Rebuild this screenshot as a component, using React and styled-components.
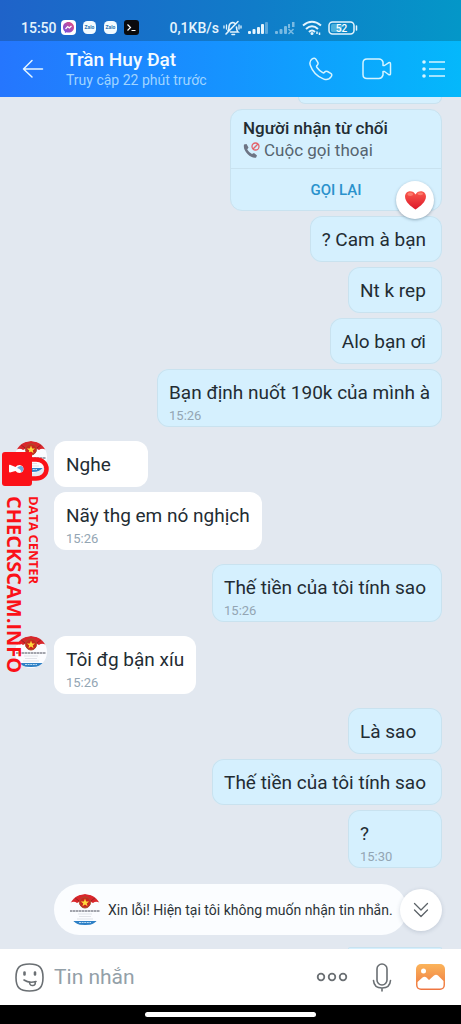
import React from 'react';
import styled, { createGlobalStyle, css } from 'styled-components';

const GlobalStyle = createGlobalStyle`
  * {
    box-sizing: border-box;
  }

  body {
    margin: 0;
    font-family: Roboto, "Noto Sans", sans-serif;
    background-color: #e2e8f0;
  }

  button {
    display: flex;
    align-items: center;
    justify-content: center;
    padding: 0;
    border: none;
    background: none;
    font-family: inherit;
  }

  svg {
    display: block;
    flex-shrink: 0;
  }
`;

const Page = styled.div`
  display: flex;
  flex-direction: column;
  min-height: 100vh;
`;

const StatusBar = styled.div`
  display: flex;
  align-items: center;
  height: 41px;
  padding: 14px 20px 0 21px;
  background: linear-gradient(90deg, #1f63c9, #107cc9 55%, #0497c8);
  color: #e4f4fd;
  font-size: 14px;
  font-weight: 500;
  line-height: 18px;
`;

const AppBadges = styled.div`
  display: flex;
  align-items: center;
  gap: 6px;
  margin-left: 4px;
`;

const Signals = styled.div`
  display: flex;
  align-items: center;
  gap: 6px;
  margin-left: 4px;
`;

const Speed = styled.span`
  margin-left: 31px;
`;

const Header = styled.header`
  display: flex;
  align-items: center;
  height: 56px;
  padding: 0 15px 0 22px;
  background: linear-gradient(90deg, #2576fe, #1594ff 50%, #04b8fb);
`;

const Contact = styled.div`
  flex: 1;
  margin-left: 22px;
`;

const ContactName = styled.h1`
  margin: 0;
  color: #f4fbff;
  font-size: 19px;
  font-weight: 500;
  line-height: 22px;
`;

const LastSeen = styled.p`
  margin: 0;
  color: #a0d4ff;
  font-size: 14px;
  line-height: 18px;
`;

const HeaderActions = styled.div`
  display: flex;
  align-items: center;
  gap: 28px;
`;

const Chat = styled.main`
  position: relative;
  display: flex;
  flex: 1;
  flex-direction: column;
  gap: 14px;
  overflow: hidden;
  padding: 0 19px 0 15px;
  background-color: #e2e8f0;
`;

const Group = styled.section`
  display: flex;
  flex-direction: column;
  align-items: ${({ mine }) => (mine ? 'flex-end' : 'flex-start')};
  gap: 5px;
`;

const Incoming = styled.div`
  display: flex;
  align-items: flex-start;
  gap: 7px;
`;

const ownSkin = css`
  border: 1px solid #c9e2ef;
  background-color: #d5f0fe;
`;

const Bubble = styled.div`
  min-width: 94px;
  padding: ${({ mine, tight }) => (mine && !tight ? '13px 16px 11px 12px' : '13px 12px 11px')};
  padding-bottom: ${({ timed }) => (timed ? '4px' : '11px')};
  border-radius: 12px;
  background-color: ${({ mine }) => (mine ? '#d5f0fe' : '#fff')};
  box-shadow: ${({ mine }) => (mine ? 'inset 0 0 0 1px #c9e2ef' : 'none')};
  color: #232c33;
  font-size: 19px;
  line-height: 22px;
`;

const Time = styled.time`
  display: block;
  margin-top: 5px;
  color: #93a5b3;
  font-size: 13px;
  line-height: 14px;
`;

const EarlierBubble = styled.div`
  ${ownSkin}
  width: 144px;
  height: 7px;
  border-top: none;
  border-radius: 0 0 12px 12px;
`;

const LaterBubble = styled.div`
  ${ownSkin}
  align-self: flex-end;
  width: 94px;
  height: 2px;
  border-bottom: none;
  border-radius: 12px 12px 0 0;
  margin-top: -2px;
`;

const CallCard = styled.article`
  ${ownSkin}
  position: relative;
  width: 212px;
  border-radius: 12px;
`;

const CallInfo = styled.div`
  padding: 7px 12px 7px;
  border-bottom: 1px solid #c9e2ef;
`;

const CallTitle = styled.h2`
  margin: 0;
  color: #232c33;
  font-size: 17px;
  font-weight: 500;
  line-height: 22px;
`;

const CallType = styled.p`
  display: flex;
  align-items: center;
  gap: 4px;
  margin: 0;
  color: #56646f;
  font-size: 17px;
  line-height: 22px;
`;

const CallBack = styled.button`
  width: 100%;
  height: 41px;
  color: #2a92cc;
  font-size: 15px;
  font-weight: 500;
`;

const Reaction = styled.button`
  position: absolute;
  right: 7px;
  bottom: -9px;
  width: 38px;
  height: 38px;
  border-radius: 50%;
  background-color: #fff;
  box-shadow: 0 1px 3px rgba(40, 70, 90, 0.4);
`;

const NoticeRow = styled.div`
  display: flex;
  align-items: center;
  margin-top: 2px;
  padding-left: 39px;
`;

const Notice = styled.div`
  display: flex;
  flex: 1;
  align-items: center;
  gap: 7px;
  height: 51px;
  padding-left: 15px;
  margin-right: -7px;
  border-radius: 26px;
  background-color: #fbfdff;
  color: #2c3338;
  font-size: 14px;
  white-space: nowrap;
`;

const ScrollDown = styled.button`
  width: 42px;
  height: 42px;
  border-radius: 50%;
  background-color: #fff;
  box-shadow: 0 1px 4px rgba(60, 80, 110, 0.2);
`;

const Watermark = styled.aside`
  position: absolute;
  top: 354px;
  left: 2px;
  color: #fb1118;
  font-family: "Open Sans", sans-serif;
  font-weight: 700;
`;

const WatermarkText = styled.div`
  display: flex;
  flex-direction: row-reverse;
  justify-content: flex-end;
  margin-top: 10px;
`;

const SiteName = styled.span`
  writing-mode: vertical-rl;
  font-size: 20px;
  line-height: 24px;
`;

const SiteTag = styled.span`
  writing-mode: vertical-rl;
  font-size: 13px;
  line-height: 16px;
`;

const Composer = styled.form`
  display: flex;
  align-items: center;
  height: 56px;
  padding: 0 15px;
  background-color: #fff;
`;

const MessageInput = styled.input`
  flex: 1;
  min-width: 0;
  margin-left: 10px;
  padding: 0;
  border: none;
  outline: none;
  font-family: inherit;
  font-size: 21px;

  &::placeholder {
    color: #93a0a8;
    opacity: 1;
  }
`;

const ComposerActions = styled.div`
  display: flex;
  align-items: center;
  gap: 24px;
`;

const NavBar = styled.footer`
  display: flex;
  justify-content: center;
  height: 19px;
  padding-top: 7px;
  background-color: #000;
`;

const NavHandle = styled.div`
  width: 37%;
  height: 5px;
  border-radius: 3px;
  background-color: #fff;
`;

const Avatar = () => (
  <svg width="32" height="32" viewBox="0 0 32 32">
    <defs>
      <clipPath id="round">
        <circle cx="16" cy="16" r="16" />
      </clipPath>
    </defs>
    <g clipPath="url(#round)">
      <rect y="8" width="32" height="24" fill="#fbfcff" />
      <path d="M1 9Q4 1 11 1L16 0L21 1Q28 1 31 9Q27 6.500 24 9L20 7H12L8 9Q5 6.500 1 9Z" fill="#d9262b" />
      <path d="M5 3L10 7M27 3L22 7" stroke="#9d1e25" strokeWidth="1" />
      <circle cx="16" cy="8.500" r="5.500" fill="#c9281f" stroke="#a8502d" strokeWidth="1" />
      <path d="M16 4.500l1.100 2.900 3 .1-2.400 1.900.9 2.900-2.600-1.700-2.600 1.700.9-2.900-2.400-1.900 3-.1z" fill="#ffd83b" />
      <path d="M1 17H31" stroke="#4a4c5a" strokeWidth="1" strokeDasharray="2.500 .5" />
      <path d="M9 20H23M10 22.500H22M8 25H24" stroke="#d5d9e0" strokeWidth=".7" />
      <path d="M2 27H30L26 30Q16 32 6 30Z" fill="#2e80c6" />
      <path d="M10 28.500H22" stroke="#b9daf2" strokeWidth="1" strokeDasharray="2 .6" />
    </g>
  </svg>
);

const ZaloBadge = () => (
  <svg width="15" height="15" viewBox="0 0 15 15">
    <rect x="1" y="1" width="13" height="13" rx="4.500" fill="#f3fbff" />
    <text x="7.500" y="9" textAnchor="middle" fontSize="5" fontWeight="700" fill="#2f76b5">Zalo</text>
  </svg>
);

const StatusIcons = () => (
  <Signals>
    <svg width="19" height="18" viewBox="0 0 19 18" fill="none" stroke="#e4f4fd" strokeWidth="1.600" strokeLinecap="round">
      <path d="M5 11.500Q6 10.500 6 7.500Q6.500 4 9.500 3.500Q11 3.500 12 4.500M13.500 8Q13.500 11.500 15 13H7.500M9 15.500H11.500M3 15L15 2.500" />
      <path d="M3.500 6V10M1 7V9M16 6V10M18 7V9" strokeWidth="1.300" />
    </svg>
    <svg width="21" height="14" viewBox="0 0 21 14" fill="#e4f4fd">
      <rect x="0" y="10" width="3" height="3" rx="1" />
      <rect x="4.500" y="8" width="3" height="5" rx="1" />
      <rect x="9" y="6" width="3" height="7" rx="1" />
      <rect x="13" y="3" width="3" height="10" rx="1" />
      <rect x="17" y="1" width="3" height="12" rx="1" opacity=".35" />
    </svg>
    <svg width="21" height="14" viewBox="0 0 21 14" fill="#e4f4fd" opacity=".5">
      <rect x="0" y="10" width="3" height="3" rx="1" />
      <rect x="4.500" y="8" width="3" height="5" rx="1" />
      <rect x="9" y="5" width="3" height="8" rx="1" />
      <rect x="13" y="3" width="2" height="4" />
      <rect x="17" y="1" width="2.500" height="5" />
      <path d="M13.500 8L18.500 13M18.500 8L13.500 13" stroke="#e4f4fd" strokeWidth="1.500" />
    </svg>
    <svg width="20" height="16" viewBox="0 0 20 16" fill="none" stroke="#e4f4fd" strokeWidth="2">
      <path d="M1 5.500Q10-2 19 5.500M4 9Q10 3.500 16 9M7 12Q10 9 13 12" />
      <circle cx="10" cy="13.500" r="1.500" fill="#e4f4fd" stroke="none" />
      <path d="M15 11.500V14M17.500 12.500V15" strokeWidth="1.500" />
    </svg>
    <svg width="30" height="14" viewBox="0 0 30 14">
      <rect x="1" y="1" width="25" height="12" rx="3.500" fill="none" stroke="#e4f4fd" strokeWidth="1.500" />
      <rect x="3" y="3" width="11" height="8" rx="1.500" fill="#4db1dc" />
      <path d="M28.500 5V9" stroke="#e4f4fd" strokeWidth="1.500" strokeLinecap="round" />
      <text x="13.500" y="10.500" textAnchor="middle" fontSize="10" fontWeight="500" fill="#fff">52</text>
    </svg>
  </Signals>
);

const Message = ({ mine, tight, time, children }) => (
  <Bubble mine={mine} tight={tight} timed={Boolean(time)}>
    {children}
    {time && <Time>{time}</Time>}
  </Bubble>
);

const App = () => {
  return (
    <Page>
      <GlobalStyle />
      <StatusBar>
        <span>15:50</span>
        <AppBadges>
          <svg width="15" height="15" viewBox="0 0 15 15">
            <defs>
              <linearGradient id="messenger" x1="0" y1="1" x2="1" y2="0">
                <stop offset="0" stopColor="#6450e8" />
                <stop offset="1" stopColor="#ef4b7c" />
              </linearGradient>
            </defs>
            <rect width="15" height="15" rx="4" fill="#fff" />
            <path d="M7.500 2C4.200 2 2 4.400 2 7.400c0 1.700.7 3 1.900 4V13l1.700-.8c.6.200 1.200.3 1.900.3 3.300 0 5.500-2.300 5.500-5.100S10.800 2 7.500 2z" fill="url(#messenger)" />
            <path d="M4.500 9L6.700 6.500L8.300 8L10.500 6" fill="none" stroke="#fff" strokeWidth="1.200" />
          </svg>
          <ZaloBadge />
          <ZaloBadge />
          <svg width="15" height="15" viewBox="0 0 15 15">
            <rect width="15" height="15" rx="3" fill="#0a0a0c" />
            <path d="M3.500 4.500L6.500 7.500L3.500 10.500M7.500 10.500H11.500" fill="none" stroke="#fff" strokeWidth="1.200" />
          </svg>
        </AppBadges>
        <Speed>0,1KB/s</Speed>
        <StatusIcons />
      </StatusBar>

      <Header>
        <button type="button" aria-label="Quay lại">
          <svg width="22" height="20" viewBox="0 0 22 20" fill="none" stroke="#e6f6ff" strokeWidth="1.500" strokeLinecap="round" strokeLinejoin="round">
            <path d="M20.500 10H1.500M10 1.500L1.500 10L10 18" />
          </svg>
        </button>
        <Contact>
          <ContactName>Trần Huy Đạt</ContactName>
          <LastSeen>Truy cập 22 phút trước</LastSeen>
        </Contact>
        <HeaderActions>
          <button type="button" aria-label="Gọi thoại">
            <svg width="26" height="24" viewBox="0 0 26 24" fill="none" stroke="#d5f4ff" strokeWidth="1.500" strokeLinejoin="round">
              <path d="M4.200 1.900C5.700.8 7.200 1 8 2.300L9.800 5.400C10.500 6.800 10 7.700 8.900 8.600C8.300 9.200 8.500 9.800 9 10.500C10.600 12.700 12.500 14.500 14.700 15.700C15.500 16.100 16 15.900 16.500 15.200C17.300 14.100 18.300 13.900 19.500 14.500L22.700 16.300C24 17 24.100 18.300 23.200 19.600C21.500 22.100 18.800 23.200 15.800 22.100C9.500 19.700 4.300 14.100 2.300 8.200C1.400 5.500 2.200 3.300 4.200 1.900Z" />
            </svg>
          </button>
          <button type="button" aria-label="Gọi video">
            <svg width="30" height="22" viewBox="0 0 30 22" fill="none" stroke="#d5f4ff" strokeWidth="1.500" strokeLinejoin="round">
              <path d="M5 1H17Q20 1 21 4V7.500H22.500L26.500 4.800Q28.500 4 28.500 6V15.500Q28.500 17.500 26.500 16.500L22.500 13.500H21V17Q20 20.500 17 20.500H5Q1 20.500 1 16.500V5Q1 1 5 1Z" />
            </svg>
          </button>
          <button type="button" aria-label="Tùy chọn">
            <svg width="26" height="20" viewBox="0 0 26 20" stroke="#d5f4ff" strokeWidth="1.500" fill="#d5f4ff">
              <path d="M9 3H25M9 10H25M9 17H25" />
              <g stroke="none">
                <circle cx="4" cy="3" r="1.800" />
                <circle cx="4" cy="10" r="1.800" />
                <circle cx="4" cy="17" r="1.800" />
              </g>
            </svg>
          </button>
        </HeaderActions>
      </Header>

      <Chat>
        <Group mine>
          <EarlierBubble />
          <CallCard>
            <CallInfo>
              <CallTitle>Người nhận từ chối</CallTitle>
              <CallType>
                <svg width="17" height="17" viewBox="0 0 17 17">
                  <path d="M1 2.500L3.500 2L5.500 5.500L4.200 7.500Q6 10.500 9 12L11 11L14 13.500L13 15.700Q9 16.500 4.500 12Q0 7 1 2.500Z" fill="#6d7484" />
                  <circle cx="12.500" cy="4.500" r="3.500" fill="none" stroke="#e4626a" strokeWidth="1.300" />
                  <path d="M10 7L15 2" stroke="#e4626a" strokeWidth="1.300" />
                </svg>
                Cuộc gọi thoại
              </CallType>
            </CallInfo>
            <CallBack type="button">GỌI LẠI</CallBack>
            <Reaction type="button" aria-label="Thả tim">
              <svg width="23" height="20" viewBox="0 0 24 21">
                <defs>
                  <linearGradient id="heart" x1="0" y1="0" x2="0" y2="1">
                    <stop offset="0" stopColor="#fb5a4e" />
                    <stop offset="1" stopColor="#dc1728" />
                  </linearGradient>
                </defs>
                <path d="M12 20.500C7 17 1 12.500 1 6.800C1 3.500 3.300 1.200 6.300 1.200C8.900 1.200 11 2.500 12 4.600C13 2.500 15.100 1.200 17.700 1.200C20.700 1.200 23 3.500 23 6.800C23 12.500 17 17 12 20.500Z" fill="url(#heart)" />
                <ellipse cx="6.500" cy="4.500" rx="3" ry="1.800" fill="#ff9a85" opacity=".6" />
                <ellipse cx="17" cy="4" rx="3" ry="1.500" fill="#ff9a85" opacity=".6" />
              </svg>
            </Reaction>
          </CallCard>
          <Message mine>? Cam à bạn</Message>
          <Message mine>Nt k rep</Message>
          <Message mine>Alo bạn ơi</Message>
          <Message mine tight time="15:26">Bạn định nuốt 190k của mình à</Message>
        </Group>

        <Incoming>
          <Avatar />
          <Group>
            <Message>Nghe</Message>
            <Message time="15:26">Nãy thg em nó nghịch</Message>
          </Group>
        </Incoming>

        <Group mine>
          <Message mine time="15:26">Thế tiền của tôi tính sao</Message>
        </Group>

        <Incoming>
          <Avatar />
          <Message time="15:26">Tôi đg bận xíu</Message>
        </Incoming>

        <Group mine>
          <Message mine>Là sao</Message>
          <Message mine>Thế tiền của tôi tính sao</Message>
          <Message mine time="15:30">?</Message>
        </Group>

        <NoticeRow>
          <Notice>
            <Avatar />
            Xin lỗi! Hiện tại tôi không muốn nhận tin nhắn.
          </Notice>
          <ScrollDown type="button" aria-label="Xuống cuối">
            <svg width="16" height="16" viewBox="0 0 16 16" fill="none" stroke="#5d6368" strokeWidth="1.300" strokeLinecap="round" strokeLinejoin="round">
              <path d="M1.500 1.500L8 8L14.500 1.500M1.500 8L8 14.500L14.500 8" />
            </svg>
          </ScrollDown>
        </NoticeRow>
        <LaterBubble />

        <Watermark>
          <svg width="47" height="35" viewBox="0 0 47 35">
            <path d="M29 8.500H34C40 8.500 44.500 12.500 44.500 18S40 27.500 34 27.500H29" fill="none" stroke="#fb1118" strokeWidth="4.500" />
            <rect y="1" width="30" height="34" rx="3" fill="#fb1118" />
            <path d="M7 14.500Q7 13.500 8 13.800L13.500 16Q15 14 17.500 14Q21.500 14.500 21.500 18Q21.500 21.500 17.500 22Q15 22 13.500 20L8 21.500Q7 21.500 7 20.500Z" fill="#fff" />
            <path d="M15 17Q17 14.500 19.500 15Q21.500 16 21.500 18Q21 20.500 19 21.500Q20 18.500 15 17Z" fill="#6fabdc" />
          </svg>
          <WatermarkText>
            <SiteTag>DATA CENTER</SiteTag>
            <SiteName>CHECKSCAM.INFO</SiteName>
          </WatermarkText>
        </Watermark>
      </Chat>

      <Composer>
        <button type="button" aria-label="Nhãn dán">
          <svg width="29" height="29" viewBox="0 0 29 29" fill="none" stroke="#6a6f73" strokeWidth="1.600" strokeLinecap="round" strokeLinejoin="round">
            <path d="M14.500 1C24 1 28 4 28 14.500S24 28 14.500 28S1 25 1 14.500S5 1 14.500 1Z" />
            <path d="M9 17Q14 20.500 21 18.500" />
            <path d="M14.500 19.500Q15 23 18 22.500Q21 22 20 18.800" />
            <path d="M9.500 9.500V11.500M20 9.500V11.500" strokeWidth="2.600" />
          </svg>
        </button>
        <MessageInput type="text" placeholder="Tin nhắn" aria-label="Tin nhắn" />
        <ComposerActions>
          <button type="button" aria-label="Thêm">
            <svg width="32" height="10" viewBox="0 0 32 10" fill="none" stroke="#6a6f73" strokeWidth="1.800">
              <circle cx="5" cy="5" r="3.300" />
              <circle cx="16" cy="5" r="3.300" />
              <circle cx="27" cy="5" r="3.300" />
            </svg>
          </button>
          <button type="button" aria-label="Ghi âm">
            <svg width="20" height="29" viewBox="0 0 20 29" fill="none" stroke="#6a6f73" strokeWidth="1.600" strokeLinecap="round">
              <rect x="5" y="1" width="10" height="21" rx="5" />
              <path d="M1.500 17.500Q2 25 10 25Q18 25 18.500 17.500M10 25V28" />
            </svg>
          </button>
          <button type="button" aria-label="Ảnh">
            <svg width="30" height="28" viewBox="0 0 30 28">
              <defs>
                <linearGradient id="photo" x1="0" y1="0" x2="0" y2="1">
                  <stop offset="0" stopColor="#fbb45a" />
                  <stop offset="1" stopColor="#ee7440" />
                </linearGradient>
              </defs>
              <rect x="0" y="1" width="29" height="26" rx="5" fill="url(#photo)" />
              <path d="M1.500 19L6.500 14.500Q8.500 13 10.500 14.500L13 17L18 12.500Q20 11 22 12.500L27.500 18V22Q27.500 25.500 24 25.500H5Q1.500 25.500 1.500 22Z" fill="#fff" />
              <circle cx="7.500" cy="8" r="2.500" fill="#fff" />
            </svg>
          </button>
        </ComposerActions>
      </Composer>
      <NavBar>
        <NavHandle />
      </NavBar>
    </Page>
  );
};

export default App;
